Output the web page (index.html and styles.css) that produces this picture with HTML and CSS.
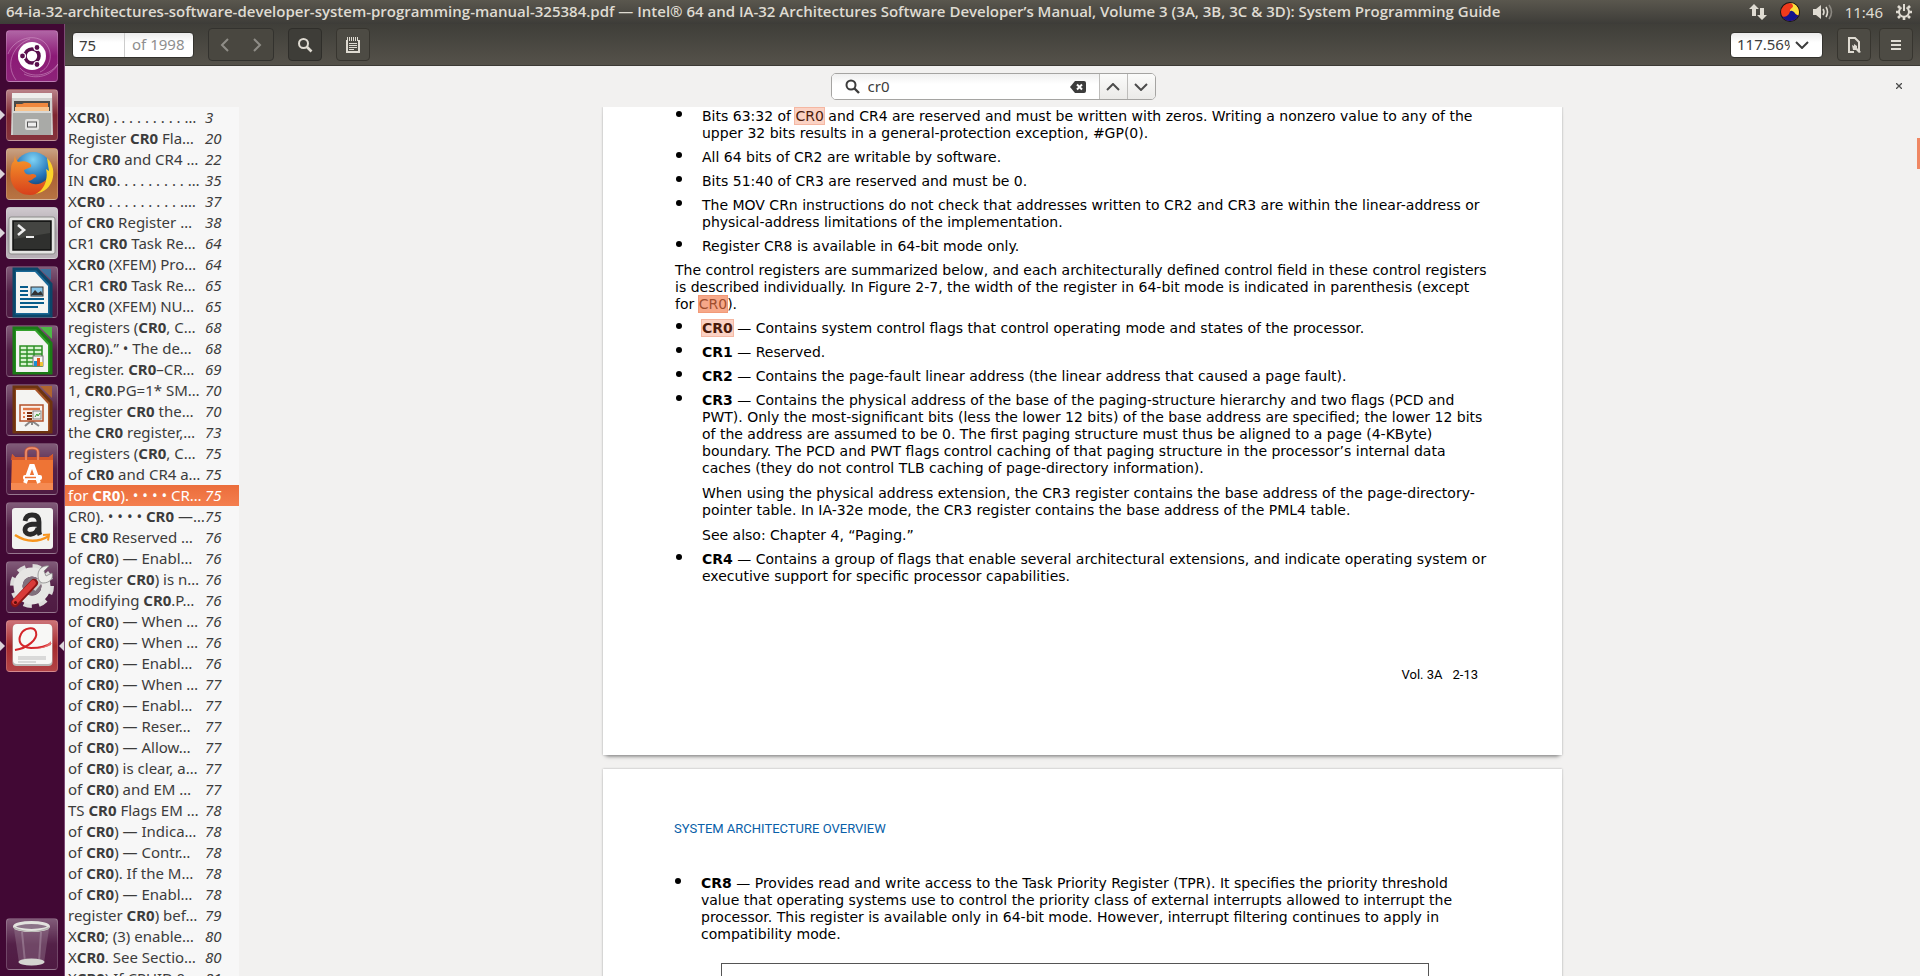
FILE: index.html
```
<!DOCTYPE html>
<html lang="en">
<head>
<meta charset="utf-8">
<title>64-ia-32-architectures-software-developer-system-programming-manual-325384.pdf</title>
<link rel="stylesheet" href="styles.css">
</head>
<body>
<header class="panel">
  <h1 class="panel-title">64-ia-32-architectures-software-developer-system-programming-manual-325384.pdf — Intel® 64 and IA-32 Architectures Software Developer’s Manual, Volume 3 (3A, 3B, 3C &amp; 3D): System Programming Guide</h1>
  <div class="indicators">
    <svg width="18" height="18" viewBox="0 0 18 18" fill="#dfdbd2"><path d="M5 1l5 5H7v7H3V6H0zM13 17l-5-5h3V5h4v7h3z"/></svg>
    <svg width="22" height="22" viewBox="0 0 22 22"><circle cx="11" cy="11" r="10" fill="#161616"/><circle cx="11" cy="11" r="9" fill="#f03a1c"/><path d="M10 2a9 9 0 0 1 10 9 9 9 0 0 1-1 4c-2-4-8-1-8-5 0-3 3-3 3-5 0-2-2-3-4-3z" fill="#fbe03c"/><path d="M19.500 14A9 9 0 0 1 3 15c3 2 5 0 7-2 1-2 1-4 3-3 3 0 3 5 6.500 4z" fill="#14148c"/></svg>
    <svg width="20" height="18" viewBox="0 0 20 18" fill="none" stroke="#dfdbd2" stroke-width="1.600"><path d="M0 6h3l5-4v14l-5-4H0z" fill="#dfdbd2" stroke="none"/><path d="M10 6q2 3 0 6M13 4q3 5 0 10"/><path d="M16 2q5 7 0 14" stroke="#8b8881"/></svg>
    <time class="clock">11:46</time>
    <svg width="18" height="18" viewBox="0 0 18 18" fill="none" stroke="#dfdbd2" stroke-width="2"><path d="M6.500 4.500a5 5 0 1 0 5 0M9 1v7"/><path d="M1 9h3M14 9h3M3 3l2 2M13 5l2-2M3 15l2-2M13 13l2 2M9 14v3" stroke-width="2.600"/></svg>
  </div>
</header>
<div class="desktop">
  <nav class="launcher" aria-label="Launcher">
    <button class="tile tile-dash" aria-label="Dash"><svg viewBox="0 0 52 52"><g fill="none" stroke="#d9a6cf" stroke-opacity=".5"><path d="M2 24C8 8 30 2 40 14c8 10 4 24-6 28M10 50C-2 34 8 14 24 9M52 34c-10 14-30 14-38 4M18 44c12 6 28 2 34-10"/></g><circle cx="26" cy="26" r="14" fill="#fff"/><circle cx="26" cy="26" r="7" fill="none" stroke="#5a0f4d" stroke-width="3.600"/><g fill="#5a0f4d" stroke="#fff" stroke-width="1.200"><circle cx="16.500" cy="26" r="3"/><circle cx="31" cy="17.500" r="3"/><circle cx="31" cy="34.500" r="3"/></g></svg></button>
    <button class="tile tile-files running" aria-label="Files"><svg viewBox="0 0 52 52"><path d="M6 4h40l1 42H5z" fill="#cfcfcd"/><path d="M6 4h40v5H6z" fill="#eeeeec"/><path d="M8 12h36v10H8z" fill="#4a4a48"/><path d="M10 15h6l2-1h24v8H10z" fill="#f0883e"/><path d="M9 18h34v4H9z" fill="#f8c48d"/><path d="M7 22h38v24H7z" fill="#a9aaa7"/><path d="M7 22h38v2H7z" fill="#d8d8d6"/><rect x="19" y="30" width="14" height="11" rx="2" fill="#e3e3e1"/><rect x="21.500" y="33" width="9" height="5" fill="#eee" stroke="#555"/></svg></button>
    <button class="tile tile-firefox running" aria-label="Firefox"><svg viewBox="0 0 52 52"><defs><linearGradient id="ff" x1="0" y1="0" x2="0" y2="1"><stop offset="0" stop-color="#f79a2c"/><stop offset="1" stop-color="#d8401b"/></linearGradient><radialGradient id="globe" cx=".5" cy=".2" r=".8"><stop offset="0" stop-color="#7fd3f5"/><stop offset=".6" stop-color="#2273b8"/><stop offset="1" stop-color="#12305f"/></radialGradient></defs><circle cx="27" cy="23" r="19" fill="url(#globe)"/><path d="M41 10c6 6 8 14 5 23-3 8-11 13-19 13l6-6c7-3 9-11 7-19l3 2z" fill="#fbd329"/><path d="M9 7c0 3 1 5 3 7 4-1 7-1 9 0 3 1 5 3 4 5l-7 3c1 5 4 5 8 4 3 0 5 1 4 3-3 1-4 4-8 4 5 5 12 4 18-1-1 7-7 15-16 15C11 47 2 36 5 21c0-4 1-6 3-8z" fill="url(#ff)"/></svg></button>
    <button class="tile tile-terminal running" aria-label="Terminal"><svg viewBox="0 0 52 52"><rect x="3" y="10" width="46" height="37" rx="2" fill="#e4e4e2" stroke="#8c8c8a"/><rect x="7" y="14" width="38" height="29" fill="#2f302e" stroke="#111" stroke-width="1.500"/><path d="M8 15h36v11L8 32z" fill="#444542"/><path d="M12 18l6 5-6 5" fill="none" stroke="#eee" stroke-width="2.600"/><path d="M20 30h8" stroke="#eee" stroke-width="2"/></svg></button>
    <button class="tile" aria-label="Writer"><svg viewBox="0 0 52 52"><path d="M8 3h23l14 15v32H8z" fill="#1a6896" stroke="#0c4669" stroke-width="3"/><path d="M34 3h11v11z" fill="#2e79a8" opacity=".8"/><path d="M10 6h19l13 14v27H10z" fill="#f4f4f2"/><g stroke="#075c8b" stroke-width="2"><path d="M14 21h8M14 25h8M14 29h8M14 33h24M14 37h24M14 41h18"/></g><rect x="25" y="21" width="12" height="9" fill="#85c4e8" stroke="#333"/><path d="M25 29l4-5 3 3 3-2 2 4z" fill="#333"/></svg></button>
    <button class="tile" aria-label="Calc"><svg viewBox="0 0 52 52"><path d="M8 3h23l14 15v30H8z" fill="#33a02c" stroke="#1b7c16" stroke-width="3"/><path d="M34 2h12v12z" fill="#4eb847"/><path d="M10 6h19l13 14v27H10z" fill="#f4f4f2"/><rect x="14" y="21" width="22" height="20" fill="#d9f3d2" stroke="#2c8f25" stroke-width="1.500"/><path d="M21 21v20M28 21v20M14 25h22M14 29h22M14 33h22M14 37h22" stroke="#2c8f25" stroke-width="1.400"/><rect x="27" y="31" width="10" height="10" fill="#f5f5f5" stroke="#777"/><path d="M28 41v-5h3v5z" fill="#1a90d6"/><path d="M31 41v-8h3v8z" fill="#e2551d"/><path d="M34 41v-4h3v4z" fill="#edc438"/></svg></button>
    <button class="tile" aria-label="Impress"><svg viewBox="0 0 52 52"><path d="M8 3h23l14 15v30H8z" fill="#a8562a" stroke="#6e3410" stroke-width="3"/><path d="M34 2h12v12z" fill="#b0652f"/><path d="M10 6h19l13 14v27H10z" fill="#f4f4f2"/><path d="M25 37l-6 5M26 37l7 5M26 37v4" stroke="#888" stroke-width="2"/><rect x="14" y="21" width="23" height="16" fill="#faf1ea" stroke="#b4502a" stroke-width="1.500"/><path d="M17 25h17" stroke="#df7748" stroke-width="2.400"/><path d="M17 29h2M17 33h2" stroke="#df7748" stroke-width="2"/><path d="M21 29h5M21 32h5M21 35h5" stroke="#7b2c0c" stroke-width="2"/><rect x="27" y="27" width="8" height="8" fill="#eee" stroke="#888"/><path d="M29 33l2-3 1 2 2-3" fill="none" stroke="#3a9a35"/></svg></button>
    <button class="tile" aria-label="Software"><svg viewBox="0 0 52 52"><path d="M20 17V9q0-4 6-4t6 4v8" fill="none" stroke="#c95a39" stroke-width="3"/><path d="M6 11l3 3h34l4-3v36H5z" fill="#ee7435"/><path d="M6 11l3 3h34l4-3v6H5z" fill="#d4582c"/><path d="M5 40h42v7H5z" fill="#f58a52"/><path d="M20 17V9q0-4 6-4t6 4v8" fill="none" stroke="#f0926f" stroke-width="1.500"/><path d="M19 40l6-17h2l6 17" fill="none" stroke="#fff" stroke-width="3.800"/><rect x="17" y="32" width="19" height="5" rx="2" fill="#fff"/><path d="M19 34.500h11" stroke="#ee7435" stroke-width="1.500"/></svg></button>
    <button class="tile" aria-label="Amazon"><svg viewBox="0 0 52 52"><rect x="6" y="6" width="41" height="41" rx="3" fill="#f2f2f0"/><path d="M19 19q1-6 7-6 7 0 7 7v9q0 2 1 4M32 22c-8 0-13 1-13 6 0 6 11 6 13-2" fill="none" stroke="#2a2a2a" stroke-width="4.800"/><path d="M9 33q17 11 34 1" fill="none" stroke="#f7941d" stroke-width="2.600"/><path d="M37 33l6-.500-1 6" fill="none" stroke="#f7941d" stroke-width="2"/></svg></button>
    <button class="tile" aria-label="System Settings"><svg viewBox="0 0 52 52"><circle cx="26" cy="25" r="19" fill="none" stroke="#dcdcda" stroke-width="6" stroke-dasharray="8 6.920"/><circle cx="26" cy="25" r="14" fill="none" stroke="#e6e6e4" stroke-width="9"/><circle cx="26" cy="25" r="9.500" fill="#80707c"/><path d="M27 28l9-11" stroke="#c9cac8" stroke-width="6"/><path d="M32 14c0-6 5-10 11-9l-5 5 2 5 6-3c2 6-3 10-9 10-3 0-5-3-5-8z" fill="#ecece9" stroke="#888" stroke-width=".8"/><path d="M9 42l19-20" stroke="#8d1515" stroke-width="8" stroke-linecap="round"/><path d="M9 41l18-19" stroke="#d93a38" stroke-width="5.500" stroke-linecap="round"/><circle cx="9.500" cy="41.500" r="1.600" fill="#5a0d0d"/></svg></button>
    <button class="tile tile-viewer running focused" aria-label="Document Viewer"><svg viewBox="0 0 52 52"><rect x="6.500" y="5" width="40" height="41" rx="4" fill="#b9b9b7"/><rect x="7" y="4" width="39" height="40" rx="4" fill="#f8f8f6"/><path d="M9 30C22 28 32 19 30 12c-2-6-12-4-15 2-4 8 0 13 10 14 8 0 15-1 20-5" fill="none" stroke="#d4262b" stroke-width="2"/><path d="M25 28c9 1 15-1 20-7v4c-6 3-12 4-20 3z" fill="#e66a69"/><path d="M12 37h28M12 39h28M12 42h18" stroke="#bbb"/></svg></button>
    <button class="tile tile-trash" aria-label="Trash"><svg viewBox="0 0 52 52"><path d="M8 11h35l-5 34q-13 5-25 0z" fill="#a48b9f" fill-opacity=".35"/><path d="M16 14l3 30M35 14l-2 30" stroke="#c9b6c5" stroke-opacity=".35" stroke-width="2"/><ellipse cx="25.500" cy="44" rx="13" ry="3.500" fill="#d4d4d0"/><ellipse cx="25.500" cy="8.500" rx="17" ry="4" fill="#8c7388" stroke="#e3e3df" stroke-width="3"/><path d="M8 9q17 8 35 0v2q-17 6-35 0z" fill="#b5b5b1"/></svg></button>
  </nav>
  <div class="window">
    <div class="toolbar">
      <div class="page-entry"><input class="page-input" type="text" value="75" aria-label="Page"><span class="page-total">of 1998</span></div>
      <div class="tool-group">
        <button class="nav-button" aria-label="Previous"><svg width="10" height="14" viewBox="0 0 10 14"><path d="M8 1L2 7l6 6" fill="none" stroke="#8f8d87" stroke-width="2"/></svg></button>
        <button class="nav-button" aria-label="Next"><svg width="10" height="14" viewBox="0 0 10 14"><path d="M2 1l6 6-6 6" fill="none" stroke="#8f8d87" stroke-width="2"/></svg></button>
      </div>
      <button class="tool-button pressed" aria-label="Find"><svg width="16" height="16" viewBox="0 0 16 16" fill="none" stroke="#dfdbd2" stroke-width="2"><circle cx="6.500" cy="6.500" r="4.500"/><path d="M9.500 9.500l5 5" stroke-width="2.600"/></svg></button>
      <button class="tool-button" aria-label="Annotate"><svg width="14" height="16" viewBox="0 0 14 16" fill="none" stroke="#dfdbd2"><path d="M1 3v12h12V3" stroke-width="2"/><path d="M3.500 0v4M5.500 0v4M7.500 0v4M9.500 0v4M11.500 0v4M1.500 0v4" stroke-width="1"/><path d="M3 6.500h8M3 8.500h8M3 10.500h8M3 12.500h5"/></svg></button>
      <div class="zoom-box"><input class="zoom-input" type="text" value="117.56%" aria-label="Zoom"><button class="zoom-arrow" aria-label="Zoom levels"><svg width="14" height="8" viewBox="0 0 14 8"><path d="M1 1l6 6 6-6" fill="none" stroke="#3c3c3c" stroke-width="2"/></svg></button></div>
      <button class="tool-button" aria-label="View options"><svg width="14" height="16" viewBox="0 0 14 16"><path d="M2 15V1h6l4 4v9" fill="none" stroke="#dfdbd2" stroke-width="2"/><path d="M1 15h6" stroke="#dfdbd2" stroke-width="2"/><path d="M5 8l2 1V7l3 2v2l4 4-2 1-3-3H6z" fill="#dfdbd2"/></svg></button>
      <button class="tool-button last" aria-label="Menu"><svg width="10" height="12" viewBox="0 0 10 12"><path d="M0 2h10M0 6h10M0 10h10" stroke="#dfdbd2" stroke-width="2"/></svg></button>
    </div>
    <div class="findbar">
      <div class="find-group">
        <label class="find-entry"><svg width="15" height="15" viewBox="0 0 15 15" fill="none" stroke="#3c3c3c" stroke-width="2"><circle cx="6" cy="6" r="4.500"/><path d="M9 9l5 5" stroke-width="2.400"/></svg><input class="find-input" type="text" value="cr0" aria-label="Find text"><svg width="16" height="12" viewBox="0 0 16 12"><path d="M0 6l5-6h9q2 0 2 2v8q0 2-2 2H5z" fill="#3c3c3c"/><path d="M7 3.500l5 5M12 3.500l-5 5" stroke="#fff" stroke-width="2"/></svg></label>
        <button class="find-step" aria-label="Find previous"><svg width="14" height="8" viewBox="0 0 14 8"><path d="M1 7l6-6 6 6" fill="none" stroke="#4c4c4c" stroke-width="2"/></svg></button>
        <button class="find-step" aria-label="Find next"><svg width="14" height="8" viewBox="0 0 14 8"><path d="M1 1l6 6 6-6" fill="none" stroke="#4c4c4c" stroke-width="2"/></svg></button>
      </div>
      <button class="find-close" aria-label="Close"><svg width="6" height="6" viewBox="0 0 6 6"><path d="M0 0l6 6M6 0L0 6" stroke="#4c4c4c" stroke-width="1.300"/></svg></button>
    </div>
    <div class="content">
      <aside class="results">
        <button class="result"><span>X<b>CR0</b>) . . . . . . . . . …</span><i>3</i></button>
        <button class="result"><span>Register <b>CR0</b> Fla…</span><i>20</i></button>
        <button class="result"><span>for <b>CR0</b> and CR4 …</span><i>22</i></button>
        <button class="result"><span>IN <b>CR0</b>. . . . . . . . . …</span><i>35</i></button>
        <button class="result"><span>X<b>CR0</b> . . . . . . . . . .…</span><i>37</i></button>
        <button class="result"><span>of <b>CR0</b> Register …</span><i>38</i></button>
        <button class="result"><span>CR1 <b>CR0</b> Task Re…</span><i>64</i></button>
        <button class="result"><span>X<b>CR0</b> (XFEM) Pro…</span><i>64</i></button>
        <button class="result"><span>CR1 <b>CR0</b> Task Re…</span><i>65</i></button>
        <button class="result"><span>X<b>CR0</b> (XFEM) NU…</span><i>65</i></button>
        <button class="result"><span>registers (<b>CR0</b>, C…</span><i>68</i></button>
        <button class="result"><span>X<b>CR0</b>).” • The de…</span><i>68</i></button>
        <button class="result"><span>register. <b>CR0</b>–CR…</span><i>69</i></button>
        <button class="result"><span>1, <b>CR0</b>.PG=1* SM…</span><i>70</i></button>
        <button class="result"><span>register <b>CR0</b> the…</span><i>70</i></button>
        <button class="result"><span>the <b>CR0</b> register,…</span><i>73</i></button>
        <button class="result"><span>registers (<b>CR0</b>, C…</span><i>75</i></button>
        <button class="result"><span>of <b>CR0</b> and CR4 a…</span><i>75</i></button>
        <button class="result selected"><span>for <b>CR0</b>). • • • • CR…</span><i>75</i></button>
        <button class="result"><span>CR0). • • • • <b>CR0</b> —…</span><i>75</i></button>
        <button class="result"><span>E <b>CR0</b> Reserved …</span><i>76</i></button>
        <button class="result"><span>of <b>CR0</b>) — Enabl…</span><i>76</i></button>
        <button class="result"><span>register <b>CR0</b>) is n…</span><i>76</i></button>
        <button class="result"><span>modifying <b>CR0</b>.P…</span><i>76</i></button>
        <button class="result"><span>of <b>CR0</b>) — When …</span><i>76</i></button>
        <button class="result"><span>of <b>CR0</b>) — When …</span><i>76</i></button>
        <button class="result"><span>of <b>CR0</b>) — Enabl…</span><i>76</i></button>
        <button class="result"><span>of <b>CR0</b>) — When …</span><i>77</i></button>
        <button class="result"><span>of <b>CR0</b>) — Enabl…</span><i>77</i></button>
        <button class="result"><span>of <b>CR0</b>) — Reser…</span><i>77</i></button>
        <button class="result"><span>of <b>CR0</b>) — Allow…</span><i>77</i></button>
        <button class="result"><span>of <b>CR0</b>) is clear, a…</span><i>77</i></button>
        <button class="result"><span>of <b>CR0</b>) and EM …</span><i>77</i></button>
        <button class="result"><span>TS <b>CR0</b> Flags EM …</span><i>78</i></button>
        <button class="result"><span>of <b>CR0</b>) — Indica…</span><i>78</i></button>
        <button class="result"><span>of <b>CR0</b>) — Contr…</span><i>78</i></button>
        <button class="result"><span>of <b>CR0</b>). If the M…</span><i>78</i></button>
        <button class="result"><span>of <b>CR0</b>) — Enabl…</span><i>78</i></button>
        <button class="result"><span>register <b>CR0</b>) bef…</span><i>79</i></button>
        <button class="result"><span>X<b>CR0</b>; (3) enable…</span><i>80</i></button>
        <button class="result"><span>X<b>CR0</b>. See Sectio…</span><i>80</i></button>
        <button class="result"><span>X<b>CR0</b>) If CPUID.0…</span><i>81</i></button>
      </aside>
      <main class="viewer">
        <article class="page page-current">
          <ul class="bullets">
            <li><div>Bits 63:32 of <mark class="hit">CR0</mark> and CR4 are reserved and must be written with zeros. Writing a nonzero value to any of the<br>upper 32 bits results in a general-protection exception, #GP(0).</div></li>
            <li><div>All 64 bits of CR2 are writable by software.</div></li>
            <li><div>Bits 51:40 of CR3 are reserved and must be 0.</div></li>
            <li><div>The MOV CRn instructions do not check that addresses written to CR2 and CR3 are within the linear-address or<br>physical-address limitations of the implementation.</div></li>
            <li><div>Register CR8 is available in 64-bit mode only.</div></li>
          </ul>
          <p class="summary">The control registers are summarized below, and each architecturally defined control field in these control registers<br>is described individually. In Figure 2-7, the width of the register in 64-bit mode is indicated in parenthesis (except<br>for <mark class="hit current">CR0</mark>).</p>
          <ul class="bullets">
            <li><div><mark class="hit"><b>CR0</b></mark> — Contains system control flags that control operating mode and states of the processor.</div></li>
            <li><div><b>CR1</b> — Reserved.</div></li>
            <li><div><b>CR2</b> — Contains the page-fault linear address (the linear address that caused a page fault).</div></li>
            <li><div><b>CR3</b> — Contains the physical address of the base of the paging-structure hierarchy and two flags (PCD and<br>PWT). Only the most-significant bits (less the lower 12 bits) of the base address are specified; the lower 12 bits<br>of the address are assumed to be 0. The first paging structure must thus be aligned to a page (4-KByte)<br>boundary. The PCD and PWT flags control caching of that paging structure in the processor’s internal data<br>caches (they do not control TLB caching of page-directory information).
              <p>When using the physical address extension, the CR3 register contains the base address of the page-directory-<br>pointer table. In IA-32e mode, the CR3 register contains the base address of the PML4 table.</p>
              <p>See also: Chapter 4, “Paging.”</p></div></li>
            <li><div><b>CR4</b> — Contains a group of flags that enable several architectural extensions, and indicate operating system or<br>executive support for specific processor capabilities.</div></li>
          </ul>
          <footer class="folio"><span>Vol. 3A</span><span>2-13</span></footer>
        </article>
        <article class="page">
          <h2 class="running-head">SYSTEM ARCHITECTURE OVERVIEW</h2>
          <ul class="bullets">
            <li><div><b>CR8</b> — Provides read and write access to the Task Priority Register (TPR). It specifies the priority threshold<br>value that operating systems use to control the priority class of external interrupts allowed to interrupt the<br>processor. This register is available only in 64-bit mode. However, interrupt filtering continues to apply in<br>compatibility mode.</div></li>
          </ul>
          <div class="figure"></div>
        </article>
        <div class="scroll-thumb"></div>
      </main>
    </div>
  </div>
</div>
</body>
</html>
```
FILE: styles.css
```
* { box-sizing: border-box; }
body { margin: 0; height: 100vh; display: flex; flex-direction: column; overflow: hidden; background: #f2f1f0; color: #3c3c3c; font: 15px/21px "Noto Sans", sans-serif; }
button, input { font: inherit; color: inherit; margin: 0; padding: 0; border: 0; background: none; }
button { display: flex; align-items: center; justify-content: center; }
svg { display: block; flex: none; }
h1, h2, p, ul { margin: 0; padding: 0; }

.panel { flex: none; height: 24px; display: flex; align-items: center; justify-content: space-between; padding: 0 7px 0 6px; background: linear-gradient(#5a574e, #3d3c38); color: #dfdbd2; }
.panel-title { font: 600 15px/22px "Open Sans", "Noto Sans", sans-serif; margin-bottom: 2px; white-space: nowrap; }
.indicators { display: flex; align-items: center; gap: 12px; }
.clock { font-size: 15px; }

.desktop { flex: 1; min-height: 0; display: flex; }
.launcher { flex: none; width: 65px; display: flex; flex-direction: column; gap: 7px; padding: 6px; background: #410834; border-right: 1px solid #7d4a74; }
.tile { position: relative; flex: none; width: 52px; height: 52px; border-radius: 4px; border: 1px solid rgba(255, 255, 255, .18); background: linear-gradient(rgba(255, 255, 255, .34), rgba(255, 255, 255, .1) 50%, rgba(255, 255, 255, .08)); }
.tile svg { width: 52px; height: 52px; margin: -1px; }
.tile-dash { background: linear-gradient(#b065a5, #8c1a76 50%, #8d2379); }
.tile-files { background: linear-gradient(#b98288, #7f2631 50%, #85333c); }
.tile-firefox { background: linear-gradient(#c9a283, #aa6034 50%, #b87443); }
.tile-terminal { background: linear-gradient(#cfc9ce, #a99fa8 50%, #b8b0b6); }
.tile-viewer { background: linear-gradient(#cc7378, #a62a2d 50%, #b24346); }
.tile-trash { margin-top: auto; }
.running::before { content: ""; position: absolute; left: -7px; top: 20px; border: 5px solid transparent; border-left-color: #dcd4da; border-right: 0; }
.focused::after { content: ""; position: absolute; right: -7px; top: 20px; border: 5px solid transparent; border-right-color: #dcd4da; border-left: 0; }

.window { flex: 1; min-width: 0; display: flex; flex-direction: column; }
.toolbar { flex: none; height: 42px; display: flex; align-items: center; gap: 14px; padding: 0 7px; background: linear-gradient(#3f3e39, #55524a); border-bottom: 1px solid #3c3a35; }
.page-entry { display: flex; align-items: center; width: 122px; height: 26px; border-radius: 4px; border: 1px solid #33322e; background: linear-gradient(#ececec, #fff 40%); overflow: hidden; }
.page-input { width: 52px; height: 100%; padding-left: 6px; border-right: 1px solid #ccc; }
.page-total { padding-left: 7px; color: #8e8e8e; }
.tool-group { display: flex; height: 33px; border: 1px solid #33322e; border-radius: 4px; background: #494740; }
.nav-button { width: 32px; }
.tool-button { width: 34px; height: 33px; border: 1px solid #37352f; border-radius: 4px; background: #4d4b44; }
.pressed { background: #3e3d38; border-color: #2f2e2a; }
.last { margin-left: -6px; }
.zoom-box { display: flex; align-items: center; width: 93px; height: 26px; margin-left: auto; padding-left: 6px; border-radius: 4px; border: 1px solid #33322e; background: linear-gradient(#ececec, #fff 40%); }
.zoom-input { width: 53px; }
.zoom-arrow { width: 24px; height: 24px; }

.findbar { flex: none; position: relative; height: 41px; display: flex; align-items: center; justify-content: center; padding-left: 1px; }
.find-group { display: flex; height: 27px; border: 1px solid #a5a4a2; border-radius: 5px; background: #fff; overflow: hidden; }
.find-entry { display: flex; align-items: center; width: 267px; padding: 0 13px; gap: 8px; background: linear-gradient(#f0f0f0, #fff 40%); }
.find-input { flex: 1; min-width: 0; }
.find-step { width: 28px; border-left: 1px solid #bdbcba; background: linear-gradient(#fbfbfa, #ebeae8); }
.find-close { position: absolute; right: 16px; top: 15px; width: 10px; height: 10px; }

.content { flex: 1; min-height: 0; display: flex; }
.results { flex: none; width: 174px; overflow: hidden; background: #f7f7f7; }
.result { display: grid; grid-template-columns: 137px 1fr; width: 100%; height: 21px; padding-left: 3px; text-align: left; white-space: nowrap; }
.selected { background: linear-gradient(#eb6d3b, #f47f4f); color: #fff; }

.viewer { position: relative; flex: 1; min-width: 0; display: flex; flex-direction: column; align-items: center; gap: 14px; padding-left: 6px; overflow: hidden; }
.scroll-thumb { position: absolute; right: 0; top: 31px; width: 3px; height: 31px; background: #f08763; }
.page { flex: none; width: 959px; max-width: 100%; padding: 0 71px; background: #fff; box-shadow: 0 0 2px #aaa, 0 4px 4px -3px #666; color: #000; font: 14px/17px "DejaVu Sans", Verdana, sans-serif; white-space: nowrap; }
.page-current { padding: 1px 71px 0 72px; }
.bullets { display: flex; flex-direction: column; gap: 7px; list-style: none; }
.bullets li { display: grid; grid-template-columns: 27px 1fr; }
.bullets li::before { content: ""; width: 6px; height: 6px; margin: 3px 0 0 1px; border-radius: 50%; background: #000; }
.bullets p { margin-top: 8px; }
.summary { margin: 7px 0; }
.hit { background: #fbd2c4; color: #4a1b0c; outline: 1px solid #f5b7a2; }
.current { background: #f6a889; color: #a04e2e; outline-color: #f29a78; }
.folio { display: flex; justify-content: flex-end; gap: 10px; padding: 81px 13px 72px 0; font: 13px/17px Roboto, sans-serif; }
.running-head { padding: 51px 0 38px; color: #0860a8; font: 13px/17px Roboto, sans-serif; }
.figure { width: 708px; max-width: 100%; height: 300px; margin: 20px 0 0 47px; border: 1px solid #555; }
```
